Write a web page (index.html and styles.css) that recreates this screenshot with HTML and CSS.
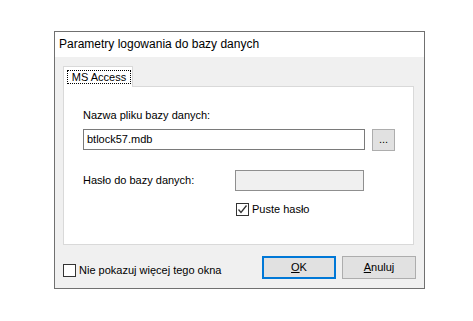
FILE: index.html
```html
<!DOCTYPE html>
<html>
<head lang="pl">
    <meta charset="UTF-8">
    <title>Parametry logowania</title>
    <link rel="stylesheet" href="styles.css">
</head>
<body>
<div class="dialog">
    <div class="dialog-title">Parametry logowania do bazy danych</div>
    <div class="dialog-body">
        <div class="tabs">
            <div class="tab"><span class="tab-focus">MS Access</span></div>
        </div>
        <section class="page">
            <div class="label">Nazwa pliku bazy danych:</div>
            <div class="file-row">
                <div class="edit">btlock57.mdb</div>
                <div class="btn btn-browse">...</div>
            </div>
            <div class="pass-row">
                <div class="label pass-label">Hasło do bazy danych:</div>
                <div class="edit edit-disabled"></div>
            </div>
            <div class="check check-empty">
                <span class="box"><svg width="11" height="11" viewBox="0 0 11 11"><path d="M1.5 5.5 L4 8.5 L9.5 1.5" fill="none" stroke="#333" stroke-width="1.3"/></svg></span>
                <span>Puste hasło</span>
            </div>
        </section>
        <div class="footer">
            <div class="check check-hide">
                <span class="box"></span>
                <span>Nie pokazuj więcej tego okna</span>
            </div>
            <div class="btn btn-ok"><u>O</u>K</div>
            <div class="btn btn-cancel"><u>A</u>nuluj</div>
        </div>
    </div>
</div>
</body>
</html>
```

FILE: styles.css
```css
body {
    margin: 0;
    background: white;
    font-family: "Liberation Sans", Arial, sans-serif;
    font-size: 11px;
    color: #000;
}
.dialog {
    margin: 31px 0 0 54px;
    width: 371px;
    height: 258px;
    box-sizing: border-box;
    border: 1px solid #707070;
    background: #f0f0f0;
}
.dialog-title {
    height: 25px;
    line-height: 25px;
    padding-left: 4px;
    background: white;
    font-size: 12px;
}
.dialog-body {
    padding: 8px 8px 0 8px;
}
.tabs {
    display: flex;
    height: 21px;
}
.tab {
    width: 70px;
    box-sizing: border-box;
    border: 1px solid #d9d9d9;
    border-bottom: none;
    background: white;
    padding: 3px 0 0 3px;
    position: relative;
    top: 1px;
}
.tab-focus {
    display: block;
    width: 64px;
    height: 14px;
    box-sizing: border-box;
    border: 1px dotted #000;
    text-align: center;
    line-height: 12px;
}
.page {
    width: 351px;
    height: 159px;
    box-sizing: border-box;
    border: 1px solid #d9d9d9;
    background: white;
    padding: 22px 0 0 19px;
    display: flex;
    flex-direction: column;
}
.label {
    line-height: 13px;
}
.file-row {
    display: flex;
    margin-top: 7px;
}
.edit {
    width: 282px;
    height: 21px;
    box-sizing: border-box;
    border: 1px solid #7a7a7a;
    background: white;
    padding-left: 3px;
    line-height: 19px;
}
.edit-disabled {
    width: 129px;
    background: #f0f0f0;
    border-color: #8f8f8f;
}
.btn {
    box-sizing: border-box;
    background: #e1e1e1;
    border: 1px solid #adadad;
    text-align: center;
}
.btn-browse {
    width: 23px;
    height: 22px;
    line-height: 18px;
    margin-left: 7px;
}
.pass-row {
    display: flex;
    align-items: center;
    margin-top: 19px;
}
.pass-label {
    width: 152px;
}
.check {
    display: flex;
    align-items: center;
    line-height: 13px;
}
.check .box {
    width: 13px;
    height: 13px;
    box-sizing: border-box;
    border: 1px solid #333;
    background: white;
    margin-right: 3px;
    display: flex;
    align-items: center;
    justify-content: center;
}
.check-empty {
    margin: 12px 0 0 153px;
}
.footer {
    display: flex;
    align-items: center;
    margin-top: 11px;
}
.check-hide {
    margin: 6px 0 0 0;
    flex: 1;
}
.btn-ok, .btn-cancel {
    width: 74px;
    height: 23px;
    line-height: 21px;
}
.btn-ok {
    border: 2px solid #0078d7;
    line-height: 19px;
}
.btn-cancel {
    margin-left: 6px;
}
```
